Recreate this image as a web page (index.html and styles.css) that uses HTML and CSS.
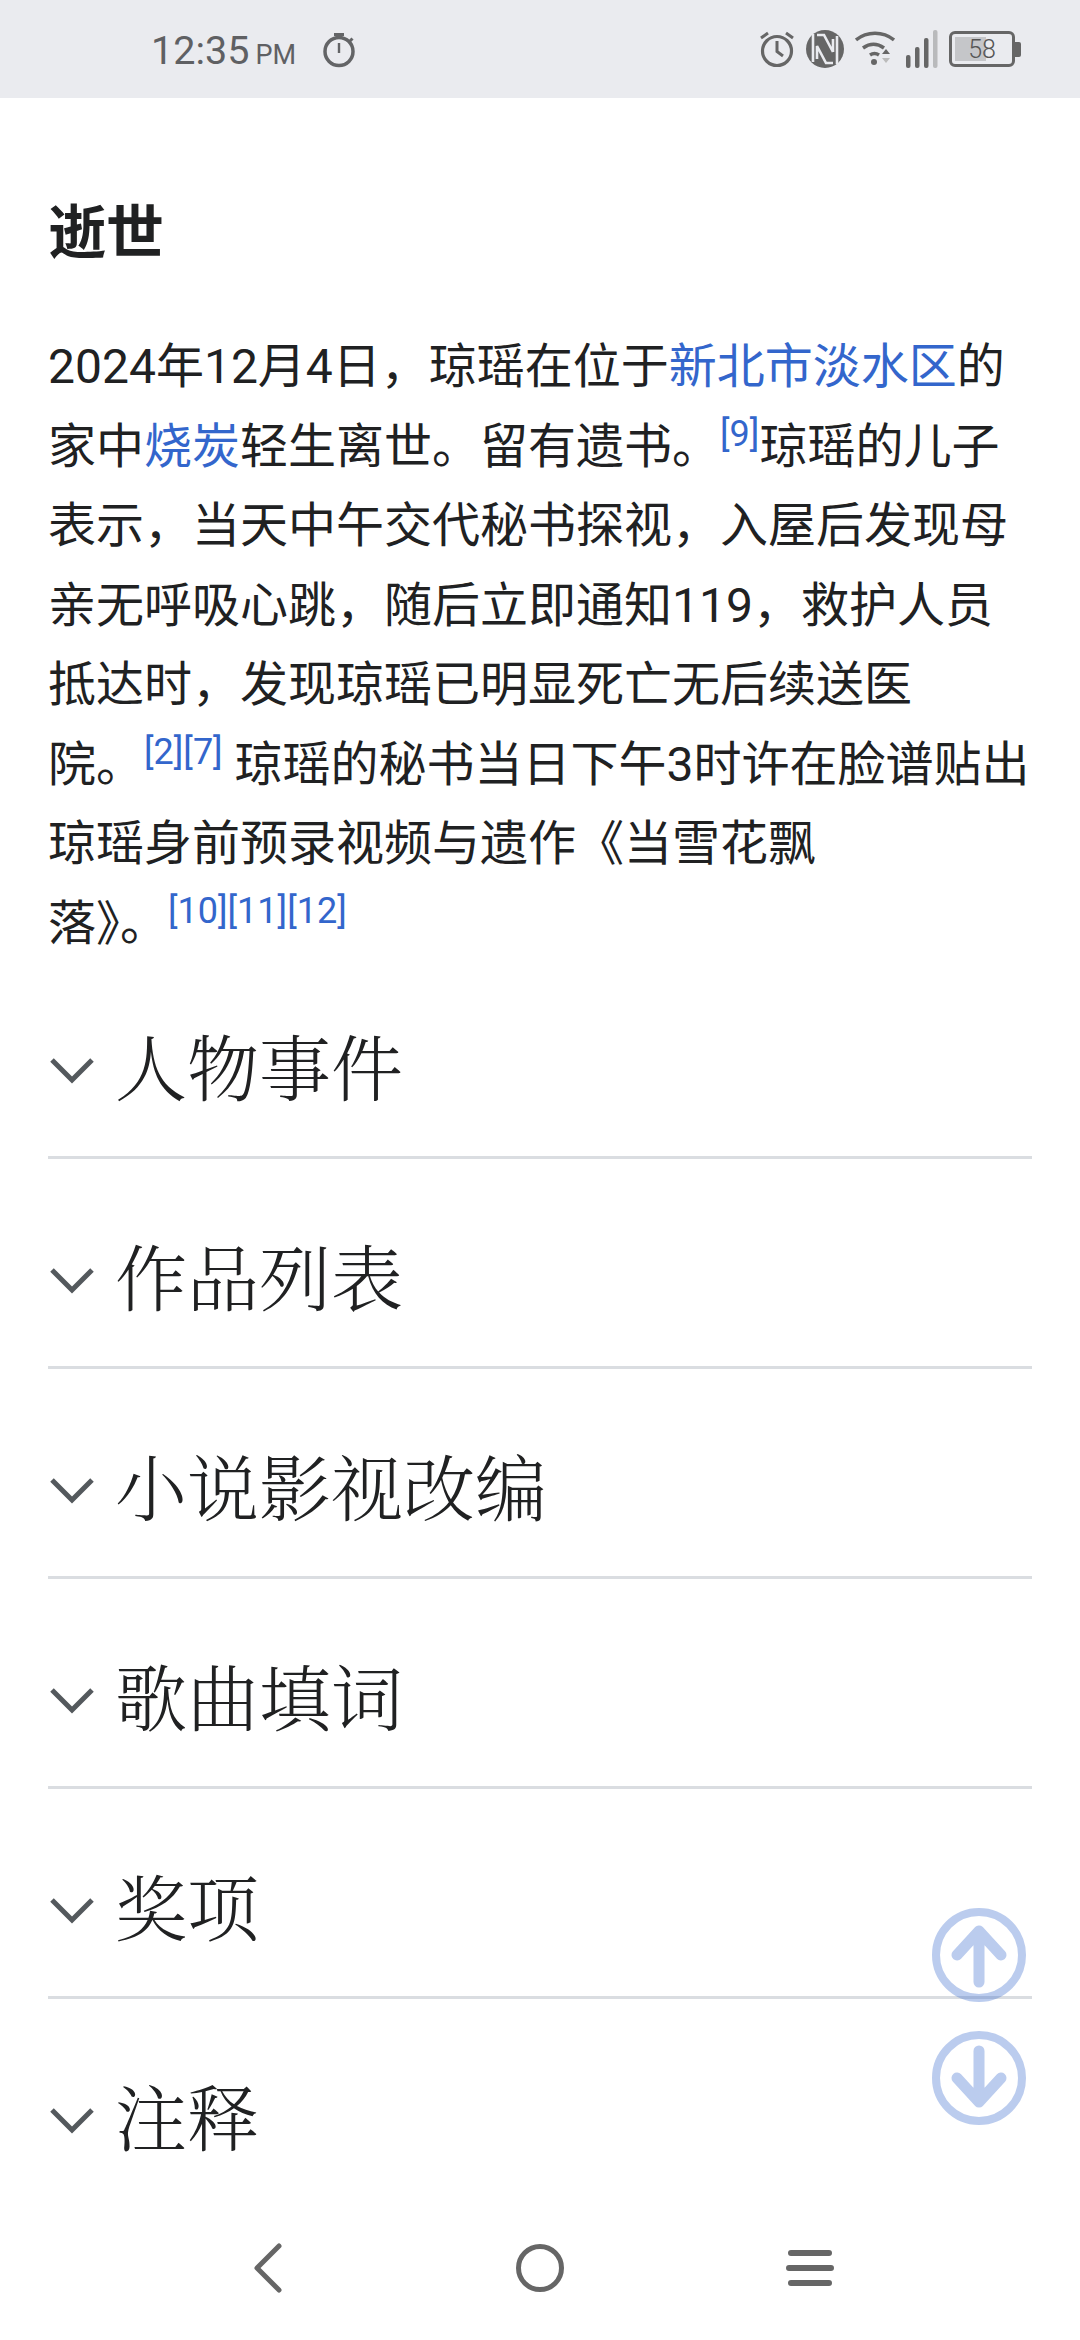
FILE: index.html
```html
<!DOCTYPE html>
<html lang="zh-CN">
<head>
    <meta charset="UTF-8">
    <meta name="viewport" content="width=device-width, initial-scale=1.0">
    <title>琼瑶</title>
    <link rel="stylesheet" href="styles.css">
</head>
<body>
    <header class="status-bar">
        <div class="status-left">
            <span class="clock">12:35</span>
            <span class="clock-suffix">PM</span>
            <svg class="timer-icon" width="40" height="40" viewBox="0 0 40 40">
                <circle cx="19" cy="21.500" r="14" fill="none" stroke="#636466" stroke-width="3.500"/>
                <path d="M14 3h10v3H14zM17.800 13h2.400v10h-2.400z" fill="#636466"/>
                <path d="M29.500 11.500l3-3" stroke="#636466" stroke-width="3" fill="none"/>
            </svg>
        </div>
        <div class="status-right">
            <svg class="alarm-icon" width="36" height="38" viewBox="0 0 36 38">
                <circle cx="18" cy="21" r="14.500" fill="none" stroke="#666" stroke-width="3.200"/>
                <path d="M18 11v10.500l6 4.500M2 8l7-5M34 8l-7-5" fill="none" stroke="#666" stroke-width="3"/>
            </svg>
            <svg class="nfc-icon" width="38" height="38" viewBox="0 0 38 38">
                <circle cx="19" cy="19" r="19" fill="#666"/>
                <path d="M7 4v28M11 5h7l9 17M31 6v28M27 33h-7l-9-17v13M27 9v13" fill="none" stroke="#eaebef" stroke-width="2.600"/>
            </svg>
            <svg class="wifi-icon" width="40" height="36" viewBox="0 0 40 36">
                <path d="M1 9c11-9 27-9 38 0M8 17c7-5 14-5 21 0M15 24c3-2 6-2 9 0" fill="none" stroke="#666" stroke-width="3.500"/>
                <circle cx="19" cy="31" r="3" fill="#666"/>
                <path d="M27 23l4-5 4 5z" fill="#666"/>
                <path d="M27 27l4 5 4-5z" fill="#bbb"/>
            </svg>
            <svg class="signal-icon" width="32" height="38" viewBox="0 0 32 38">
                <rect x="0" y="25" width="4.500" height="13" rx="2" fill="#666"/>
                <rect x="9" y="17" width="4.500" height="21" rx="2" fill="#666"/>
                <rect x="18" y="8" width="4.500" height="30" rx="2" fill="#666"/>
                <rect x="27" y="0" width="4.500" height="38" rx="2" fill="#b9babc"/>
            </svg>
            <div class="battery">
                <div class="battery-body">
                    <div class="battery-fill"></div>
                    <span class="battery-level">58</span>
                </div>
                <div class="battery-nub"></div>
            </div>
        </div>
    </header>

    <main class="article">
        <h2 class="article-title">逝世</h2>
        <p class="article-text">2024年12月4日，琼瑶在位于<a href="#">新北市淡水区</a>的家中<a href="#">烧炭</a>轻生离世。留有遗书。<sup>[9]</sup>琼瑶的儿子表示，当天中午交代秘书探视，入屋后发现母亲无呼吸心跳，随后立即通知119，救护人员抵达时，发现琼瑶已明显死亡无后续送医<span class="nowrap">院。<sup>[2][7]</sup></span> 琼瑶的秘书当日下午3时许在脸谱贴出琼瑶身前预录视频与遗作《当雪花飘<span class="nowrap">落》。<sup>[10][11][12]</sup></span></p>

        <div class="section-list">
            <div class="section-row">
                <svg class="chevron" width="44" height="28" viewBox="0 0 44 28"><path d="M2 3l20 20L42 3" fill="none" stroke="#54595d" stroke-width="5"/></svg>
                <span class="section-name">人物事件</span>
            </div>
            <div class="section-row">
                <svg class="chevron" width="44" height="28" viewBox="0 0 44 28"><path d="M2 3l20 20L42 3" fill="none" stroke="#54595d" stroke-width="5"/></svg>
                <span class="section-name">作品列表</span>
            </div>
            <div class="section-row">
                <svg class="chevron" width="44" height="28" viewBox="0 0 44 28"><path d="M2 3l20 20L42 3" fill="none" stroke="#54595d" stroke-width="5"/></svg>
                <span class="section-name">小说影视改编</span>
            </div>
            <div class="section-row">
                <svg class="chevron" width="44" height="28" viewBox="0 0 44 28"><path d="M2 3l20 20L42 3" fill="none" stroke="#54595d" stroke-width="5"/></svg>
                <span class="section-name">歌曲填词</span>
            </div>
            <div class="section-row">
                <svg class="chevron" width="44" height="28" viewBox="0 0 44 28"><path d="M2 3l20 20L42 3" fill="none" stroke="#54595d" stroke-width="5"/></svg>
                <span class="section-name">奖项</span>
            </div>
            <div class="section-row">
                <svg class="chevron" width="44" height="28" viewBox="0 0 44 28"><path d="M2 3l20 20L42 3" fill="none" stroke="#54595d" stroke-width="5"/></svg>
                <span class="section-name">注释</span>
            </div>
        </div>

        <div class="scroll-buttons">
            <svg width="94" height="94" viewBox="0 0 94 94">
                <circle cx="47" cy="47" r="43" fill="none" stroke="#36c" stroke-width="8"/>
                <path d="M47 74V23M25 47l22-24 22 24" fill="none" stroke="#36c" stroke-width="11" stroke-linecap="round" stroke-linejoin="round"/>
            </svg>
            <svg width="94" height="94" viewBox="0 0 94 94">
                <circle cx="47" cy="47" r="43" fill="none" stroke="#36c" stroke-width="8"/>
                <path d="M47 20v51M25 47l22 24 22-24" fill="none" stroke="#36c" stroke-width="11" stroke-linecap="round" stroke-linejoin="round"/>
            </svg>
        </div>
    </main>

    <nav class="nav-bar">
        <svg class="nav-back" width="30" height="50" viewBox="0 0 30 50">
            <path d="M26 3L4 25l22 22" fill="none" stroke="#666" stroke-width="5" stroke-linecap="round" stroke-linejoin="round"/>
        </svg>
        <svg class="nav-home" width="48" height="48" viewBox="0 0 48 48">
            <circle cx="24" cy="24" r="21.500" fill="none" stroke="#666" stroke-width="5"/>
        </svg>
        <svg class="nav-menu" width="48" height="40" viewBox="0 0 48 40">
            <path d="M5 5h38M3 20h42M5 35h38" fill="none" stroke="#666" stroke-width="6" stroke-linecap="round"/>
        </svg>
    </nav>
</body>
</html>
```
FILE: styles.css
```css
html, body {
    margin: 0;
    padding: 0;
}

body {
    width: 1080px;
    height: 2340px;
    display: flex;
    flex-direction: column;
    overflow: hidden;
    background-color: #fff;
    color: #202122;
    font-family: Roboto, "Noto Sans CJK SC", sans-serif;
}

.status-bar {
    height: 98px;
    flex: none;
    box-sizing: border-box;
    display: flex;
    align-items: center;
    justify-content: space-between;
    padding: 2px 59px 0 151px;
    background-color: #eaebef;
    color: #5f6063;
}

.status-left {
    display: flex;
    align-items: baseline;
}

.clock {
    font-size: 39.500px;
}

.clock-suffix {
    font-size: 27px;
    margin-left: 6px;
}

.timer-icon {
    align-self: center;
    margin-left: 24px;
}

.status-right {
    display: flex;
    align-items: center;
    gap: 11px;
    margin-top: -2px;
}

.battery {
    display: flex;
    align-items: center;
}

.battery-body {
    position: relative;
    width: 66px;
    height: 36px;
    box-sizing: border-box;
    border: 3px solid #666;
    border-radius: 6px;
    display: flex;
    align-items: center;
    justify-content: center;
}

.battery-fill {
    position: absolute;
    left: 3px;
    top: 3px;
    bottom: 3px;
    width: 31px;
    background-color: #c5c6c9;
}

.battery-level {
    position: relative;
    font-size: 25px;
    font-weight: 300;
    color: #555;
}

.battery-nub {
    width: 6px;
    height: 15px;
    background-color: #666;
    border-radius: 0 2px 2px 0;
}

.article {
    position: relative;
    flex: 1;
    overflow: hidden;
    padding: 95px 48px 0;
}

.article-title {
    margin: 0;
    font-size: 58px;
    line-height: 80px;
    font-weight: 700;
}

.article-text {
    margin: 54px 0 0;
    font-size: 48px;
    line-height: 79.500px;
}

.article-text a {
    color: #36c;
    text-decoration: none;
}

.article-text sup {
    font-size: 36px;
    line-height: 0;
    color: #36c;
}

.nowrap {
    white-space: nowrap;
}

.section-list {
    display: flex;
    flex-direction: column;
    gap: 14px;
}

.section-row {
    display: flex;
    align-items: center;
    padding: 68px 0 45px;
    border-bottom: 3px solid #dadde1;
}

.chevron {
    flex: none;
    margin: 0 21px 0 2px;
}

.section-name {
    font-family: "Liberation Serif", "Noto Serif CJK SC", "Noto Sans CJK SC", serif;
    font-weight: 300;
    font-size: 72px;
    line-height: 80px;
}

.scroll-buttons {
    position: absolute;
    left: 932px;
    top: 1810px;
    display: flex;
    flex-direction: column;
    gap: 29px;
    opacity: 0.33;
}

.nav-bar {
    height: 136px;
    flex: none;
    box-sizing: border-box;
    display: flex;
    align-items: center;
    padding: 0 0 8px 253px;
    background-color: #fff;
}

.nav-home {
    margin-left: 233px;
}

.nav-menu {
    margin-left: 222px;
}
```
